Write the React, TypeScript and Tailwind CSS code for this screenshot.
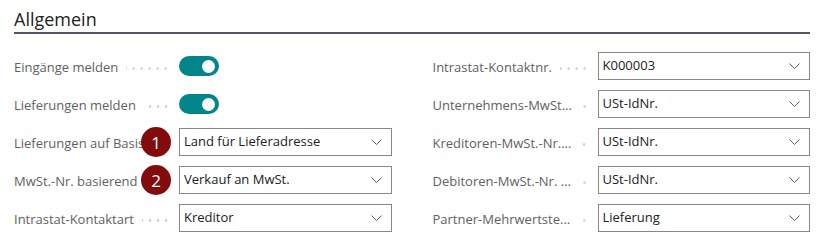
import { ReactNode } from "react";

type FieldProps = {
  label: string;
  children: ReactNode;
  badge?: string;
};

const Toggle = () => (
  <div className="flex h-[20px] w-[40px] items-center justify-end rounded-full bg-[#00858b] pr-[4px]">
    <span className="size-[13px] rounded-full bg-white" />
  </div>
);

const Dropdown = ({ value }: { value: string }) => (
  <div className="flex h-[28px] w-full items-center border border-[#8a8886] bg-white pl-[4px] pr-[9px]">
    <span className="flex-1 truncate text-[13px] text-[#212121]">{value}</span>
    <svg width="11" height="6" viewBox="0 0 11 6" fill="none">
      <path d="M0.5 0.5l5 5 5-5" stroke="#605e5c" strokeWidth="1" />
    </svg>
  </div>
);

const Field = ({ label, children, badge }: FieldProps) => (
  <div className="relative flex h-[28px] items-center">
    <div className="flex w-[165px] shrink-0 items-center pt-[4px]">
      <span className="whitespace-nowrap text-[13px] text-[#616161]">{label}</span>
      <span className="ml-[8px] mr-[9px] h-[3px] flex-1 bg-[radial-gradient(circle,#c6c6c6_1px,transparent_1.3px)] bg-[length:8px_3px] bg-right bg-repeat-x" />
    </div>
    <div className="flex flex-1 items-center">{children}</div>
    {badge && (
      <span className="absolute left-[127px] top-[-1px] flex size-[30px] items-center justify-center rounded-full bg-[#830b0b] text-[17px] leading-none text-white">
        {badge}
      </span>
    )}
  </div>
);

export default function App() {
  return (
    <div className="h-[247px] w-[820px] bg-white pl-[14px] pr-[10px] font-['Open_Sans',sans-serif]">
      <div className="border-b-2 border-[#4f5561] pb-[1px] pt-[7px]">
        <h2 className="text-[18px] leading-[24px] text-[#212121]">Allgemein</h2>
      </div>
      <div className="mt-[18px] grid grid-cols-2 gap-x-[41px] gap-y-[10px]">
        <Field label="Eingänge melden">
          <Toggle />
        </Field>
        <Field label="Intrastat-Kontaktnr.">
          <Dropdown value="K000003" />
        </Field>
        <Field label="Lieferungen melden">
          <Toggle />
        </Field>
        <Field label="Unternehmens-MwSt...">
          <Dropdown value="USt-IdNr." />
        </Field>
        <Field label="Lieferungen auf Basis" badge="1">
          <Dropdown value="Land für Lieferadresse" />
        </Field>
        <Field label="Kreditoren-MwSt.-Nr....">
          <Dropdown value="USt-IdNr." />
        </Field>
        <Field label="MwSt.-Nr. basierend" badge="2">
          <Dropdown value="Verkauf an MwSt." />
        </Field>
        <Field label="Debitoren-MwSt.-Nr. ...">
          <Dropdown value="USt-IdNr." />
        </Field>
        <Field label="Intrastat-Kontaktart">
          <Dropdown value="Kreditor" />
        </Field>
        <Field label="Partner-Mehrwertste...">
          <Dropdown value="Lieferung" />
        </Field>
      </div>
    </div>
  );
}
